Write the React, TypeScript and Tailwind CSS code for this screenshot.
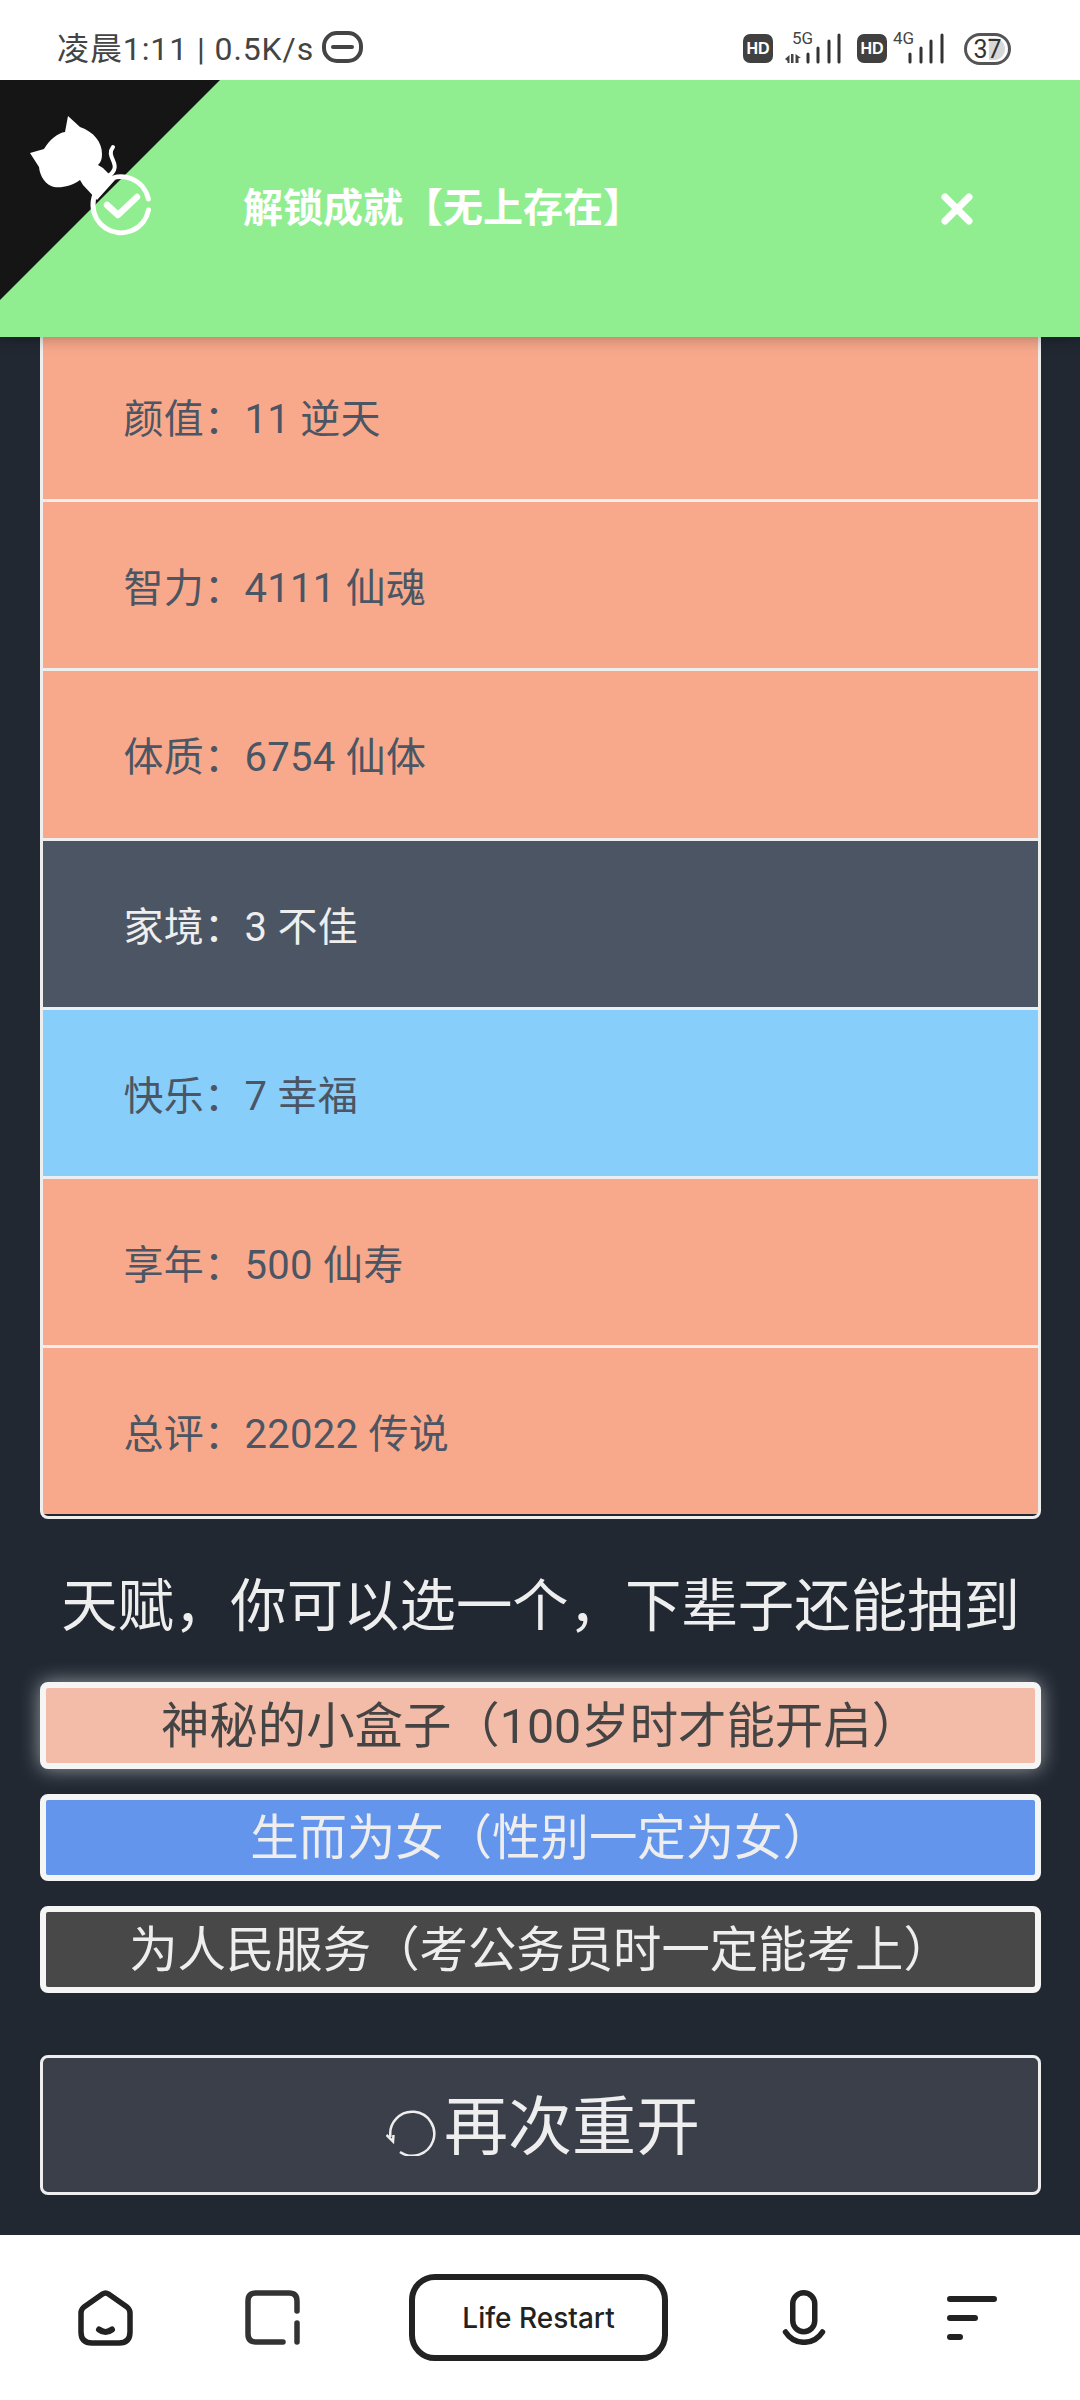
import React from 'react';

const rows = [
  { text: '颜值：11 逆天', className: 'bg-[#f8a98b] text-[#4b5563]' },
  { text: '智力：4111 仙魂', className: 'bg-[#f8a98b] text-[#4b5563]' },
  { text: '体质：6754 仙体', className: 'bg-[#f8a98b] text-[#4b5563]' },
  { text: '家境：3 不佳', className: 'bg-[#4b5563] text-[#eeeeee]' },
  { text: '快乐：7 幸福', className: 'bg-[#87cefa] text-[#4b5563]' },
  { text: '享年：500 仙寿', className: 'bg-[#f8a98b] text-[#4b5563]' },
  { text: '总评：22022 传说', className: 'bg-[#f8a98b] text-[#4b5563]' },
];

const talents = [
  { text: '神秘的小盒子（100岁时才能开启）', className: 'bg-[#f2bca9] text-[#444444] shadow-[0_0_20px_rgba(255,255,255,0.55)]' },
  { text: '生而为女（性别一定为女）', className: 'bg-[#6495ed] text-[#eeeeee]' },
  { text: '为人民服务（考公务员时一定能考上）', className: 'bg-[#484848] text-[#eeeeee]' },
];

function HdBadge() {
  return (
    <div className="w-[30px] h-[29px] rounded-[7px] bg-[#404040] text-white text-[16px] font-bold flex items-center justify-center font-['Liberation_Sans',sans-serif]">
      HD
    </div>
  );
}

function Signal({ label, arrows }: { label: string; arrows?: boolean }) {
  const bars = arrows ? [23, 33, 44, 54] : [17, 28, 38, 49];
  const tops = [30, 24, 17, 11];
  return (
    <svg width="58" height="40" viewBox="0 0 58 40" className={arrows ? 'ml-[12px] mb-[9px]' : 'ml-[6px] mb-[9px]'}>
      <text x={arrows ? 7 : 0} y="20" fontSize="17" fill="#444" fontFamily="Roboto, sans-serif">
        {label}
      </text>
      {arrows && (
        <>
          <path d="M0 35 L4.5 31 V39 H2.5 V37 Z M6 30 H8.5 V39 H6 Z" fill="#444" />
          <path d="M10.5 30 L16 34 H13.5 V39 H10.5 Z" fill="#444" />
        </>
      )}
      <g stroke="#333" strokeWidth="3" strokeLinecap="round">
        {bars.map((x, i) => (
          <line key={x} x1={x} y1={tops[i]} x2={x} y2="38" />
        ))}
      </g>
    </svg>
  );
}

function StatusBar() {
  return (
    <div className="h-[80px] shrink-0 bg-white flex items-center pt-[17px] pl-[57px] pr-[69px] text-[#444444] font-[Roboto,'Noto_Sans_CJK_SC',sans-serif]">
      <span className="text-[32px] leading-none tracking-[0.9px] whitespace-nowrap">凌晨1:11 | 0.5K/s</span>
      <svg width="41" height="32" viewBox="0 0 41 32" className="ml-[8px] -mt-[3px]">
        <rect x="2" y="2" width="37" height="28" rx="13" fill="none" stroke="#444" strokeWidth="4" />
        <line x1="11" y1="16" x2="30" y2="16" stroke="#444" strokeWidth="4" strokeLinecap="round" />
      </svg>
      <div className="ml-auto flex items-center">
        <HdBadge />
        <Signal label="5G" arrows />
        <div className="ml-[14px]">
          <HdBadge />
        </div>
        <Signal label="4G" />
        <svg width="47" height="32" viewBox="0 0 47 32" className="ml-[13px]">
          <path d="M25 5 H30 a11 11 0 0 1 0 22 H25 Z" fill="#d8d8d8" />
          <rect x="1.5" y="1.5" width="44" height="29" rx="14.5" fill="none" stroke="#555" strokeWidth="3" />
          <text x="23.5" y="25" textAnchor="middle" fontSize="25" fill="#333" fontFamily="Roboto, sans-serif">
            37
          </text>
        </svg>
      </div>
    </div>
  );
}

function Toast() {
  return (
    <div className="absolute top-0 left-0 right-0 h-[257px] bg-[#90ee90] shadow-[0_3px_14px_rgba(0,0,0,0.25)] flex items-center z-10">
      {/* corner ribbon with the cat, and the check on top of it */}
      <svg width="160" height="250" viewBox="0 0 160 250" className="absolute top-0 left-0 overflow-visible">
        <polygon points="0,0 220,0 0,220" fill="#151515" />
        <path
          d="M30 73 L44 69 C50 59 58 53 65 52 L68 36 L80 47 C94 52 102 62 102 74 C102 79 101 82 98 85 L103 88 L115 100 L97 120 L83 105 L80 100 C72 106 62 108 54 107 C46 105 40 97 39 87 Z"
          fill="#fff"
        />
        <path d="M113 67 C106 76 118 82 114 90 C112 94 109 96 106 97" fill="none" stroke="#fff" strokeWidth="4" strokeLinecap="round" />
        <path d="M148.5 130 A28 28 0 1 1 148.4 119" fill="none" stroke="#fff" strokeWidth="5" strokeLinecap="round" />
        <path d="M107 125 L118 135 L137 117" fill="none" stroke="#fff" strokeWidth="6.5" strokeLinecap="round" strokeLinejoin="round" />
      </svg>
      <span className="ml-[243px] text-[40px] font-bold text-white whitespace-nowrap leading-none">解锁成就【无上存在】</span>
      <svg width="32" height="32" viewBox="0 0 32 32" className="ml-auto mr-[107px]">
        <path d="M4 4 L28 28 M28 4 L4 28" stroke="#fff" strokeWidth="7" strokeLinecap="round" />
      </svg>
    </div>
  );
}

function BottomNav() {
  return (
    <div className="h-[165px] shrink-0 bg-white flex items-center pl-[78px] text-[#222222]">
      <svg width="55" height="56" viewBox="0 0 55 56" fill="none" stroke="#222" strokeWidth="5.5" strokeLinecap="round" strokeLinejoin="round">
        <path d="M24.5 4 Q27.5 2 30.5 4 L49 17 Q52 19.5 52 23 V42 Q52 53 41 53 H14 Q3 53 3 42 V23 Q3 19.5 6 17 Z" />
        <path d="M21 39.5 Q27.5 44.5 34 39.5" strokeWidth="6" />
      </svg>
      <svg width="55" height="55" viewBox="0 0 55 55" fill="none" stroke="#333" strokeWidth="5.5" strokeLinecap="round" className="ml-[112px]">
        <path d="M52 21 V11 Q52 3 44 3 H11 Q3 3 3 11 V44 Q3 52 11 52 H38" />
        <path d="M52 33 V52" />
      </svg>
      <div className="ml-[109px] w-[259px] h-[87px] rounded-[26px] border-[6px] border-[#222222] flex items-center justify-center text-[28px] font-medium font-[Inter,sans-serif]">
        Life Restart
      </div>
      <svg width="44" height="55" viewBox="0 0 44 55" fill="none" stroke="#222" strokeWidth="5.5" strokeLinecap="round" className="ml-[114px]">
        <rect x="10.75" y="2.75" width="22" height="39" rx="11" />
        <path d="M3.5 42 C8 49 14 52.3 22 52.3 C30 52.3 36 49 40.5 42" />
      </svg>
      <svg width="50" height="44" viewBox="0 0 50 44" fill="none" stroke="#222" strokeWidth="6" strokeLinecap="round" className="ml-[121px]">
        <path d="M3 3 H47 M3 22 H28 M3 41 H13" />
      </svg>
    </div>
  );
}

export default function App() {
  return (
    <div className="w-[1080px] h-[2400px] flex flex-col overflow-hidden bg-[#212832] font-[Roboto,'Noto_Sans_CJK_SC',sans-serif]">
      <StatusBar />

      <main className="relative flex-1 overflow-hidden pl-[40px] pr-[39px] pt-[250px]">
        <Toast />

        {/* Property list */}
        <div className="border-[3px] border-[#eeeeee] rounded-[8px] overflow-hidden bg-[#eeeeee] flex flex-col gap-[3px]">
          {rows.map((row) => (
            <div key={row.text} className={`h-[166.2px] flex items-center pl-[80.5px] pt-[8px] text-[40px] tracking-[0.3px] ${row.className}`}>
              {row.text}
            </div>
          ))}
          <div className="h-[2px] -mt-[3px] bg-[#212832]" />
        </div>

        <h2 className="mt-[56px] text-center text-[56.4px] leading-[64px] font-normal text-[#eeeeee] whitespace-nowrap">
          天赋，你可以选一个，下辈子还能抽到
        </h2>

        {/* Talents */}
        <div className="mt-[43px] flex flex-col gap-[25px]">
          {talents.map((talent) => (
            <div
              key={talent.text}
              className={`h-[87px] border-[6px] border-[#f5f5f5] rounded-[8px] flex items-center justify-center pt-[2px] text-[48.4px] whitespace-nowrap ${talent.className}`}
            >
              {talent.text}
            </div>
          ))}
        </div>

        <button className="mt-[62px] w-full h-[140px] border-[3px] border-[#eeeeee] rounded-[8px] bg-[#3b3f49] text-[#eeeeee] flex items-center justify-center pl-[5px] pt-[6px] text-[64px]">
          <svg width="51" height="46" viewBox="0 0 51 46" fill="none" stroke="#eee" strokeWidth="2.5" className="mr-[7px] mt-[10px]">
            <path d="M4.5 27 A22 22 0 1 1 14 42" />
            <path d="M0.5 25 L7 31.5 L7.5 25" />
          </svg>
          再次重开
        </button>
      </main>

      <BottomNav />
    </div>
  );
}
